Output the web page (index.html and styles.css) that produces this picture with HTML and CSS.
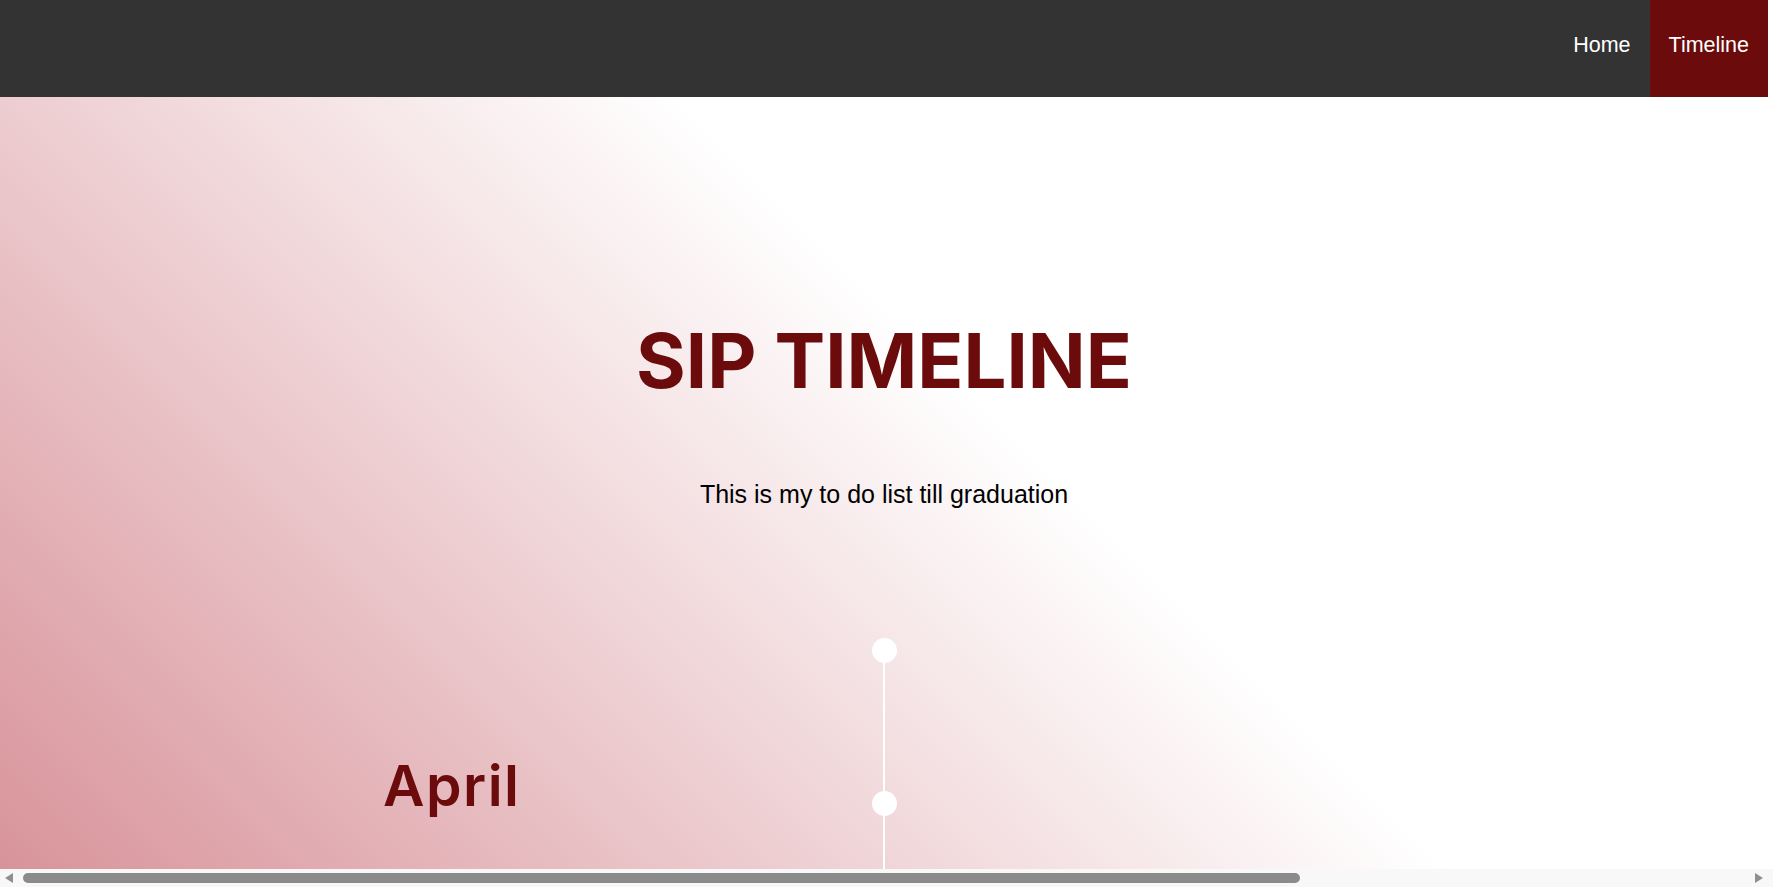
FILE: index.html
```html
<!DOCTYPE html>
<html lang="en">
<head>
<meta charset="utf-8">
<title>SIP Timeline</title>
<link rel="stylesheet" href="styles.css">
</head>
<body>
<div class="page">
  <nav class="navbar">
    <a class="nav-link" href="#">Home</a>
    <a class="nav-link active" href="#">Timeline</a>
  </nav>
  <main class="hero">
    <h1 class="hero-title">SIP TIMELINE</h1>
    <p class="hero-sub">This is my to do list till graduation</p>
    <section class="timeline">
      <div class="timeline-start"><span class="dot"></span></div>
      <div class="entry">
        <h2 class="month">April</h2>
        <span class="dot entry-dot"></span>
        <div class="entry-body"></div>
      </div>
    </section>
  </main>
</div>
<div class="hscroll" aria-hidden="true">
  <span class="hs-arrow hs-left"></span>
  <div class="hs-track"><div class="hs-thumb"></div></div>
  <span class="hs-arrow hs-right"></span>
</div>
</body>
</html>
```
FILE: styles.css
```css
html {
  overflow: hidden;
}
body {
  margin: 0;
  font-family: "Liberation Sans", Arial, sans-serif;
  background: #fff;
}
.page {
  margin-right: 5px;
}
.navbar {
  height: 97px;
  background: #333333;
  display: flex;
  justify-content: flex-end;
}
.nav-link {
  display: flex;
  align-items: center;
  padding: 0 19px 8px;
  color: #ffffff;
  text-decoration: none;
  font-size: 21.5px;
  line-height: 24px;
}
.nav-link.active {
  background: #6b0b0c;
}
.hero {
  height: 772px;
  padding-top: 217px;
  box-sizing: border-box;
  background: linear-gradient(45deg, #d8939a 0%, #ffffff 57%);
  text-align: center;
}
.hero-title {
  margin: 0;
  font-family: Inter, "Liberation Sans", sans-serif;
  font-weight: 700;
  font-size: 76px;
  line-height: 92px;
  color: #6b0b0c;
}
.hero-sub {
  margin: 74px 0 0;
  font-size: 25px;
  line-height: 29px;
  color: #000;
}
.timeline {
  position: relative;
  margin-top: 129px;
}
.timeline::before {
  content: "";
  position: absolute;
  left: calc(50% - 1px);
  top: 12px;
  width: 2px;
  height: 400px;
  background: #ffffff;
}
.timeline-start {
  display: flex;
  justify-content: center;
}
.dot {
  position: relative;
  display: block;
  width: 25px;
  height: 25px;
  border-radius: 50%;
  background: #ffffff;
}
.entry {
  display: grid;
  grid-template-columns: minmax(0, 1fr) 25px minmax(0, 1fr);
  align-items: start;
  margin-top: 89px;
}
.month {
  margin: 0;
  padding-right: 351px;
  text-align: right;
  font-family: Inter, "Liberation Sans", sans-serif;
  font-weight: 600;
  font-size: 57px;
  line-height: 68px;
  letter-spacing: 1.5px;
  color: #6b0b0c;
}
.entry-dot {
  margin-top: 39px;
}

/* horizontal scrollbar overlay */
.hscroll {
  position: fixed;
  left: 0;
  right: 0;
  bottom: 0;
  height: 18px;
  background: #f8f8f8;
  display: flex;
  align-items: center;
  padding: 0 10px 0 5px;
  box-sizing: border-box;
}
.hs-arrow {
  width: 0;
  height: 0;
  border-top: 5px solid transparent;
  border-bottom: 5px solid transparent;
}
.hs-left {
  border-right: 8px solid #8f8f8f;
}
.hs-right {
  border-left: 8px solid #8f8f8f;
}
.hs-track {
  flex: 1;
  padding: 0 10px;
  display: flex;
  align-items: center;
}
.hs-thumb {
  width: 1277px;
  height: 10px;
  border-radius: 5px;
  background: #8b8b8b;
}
```
